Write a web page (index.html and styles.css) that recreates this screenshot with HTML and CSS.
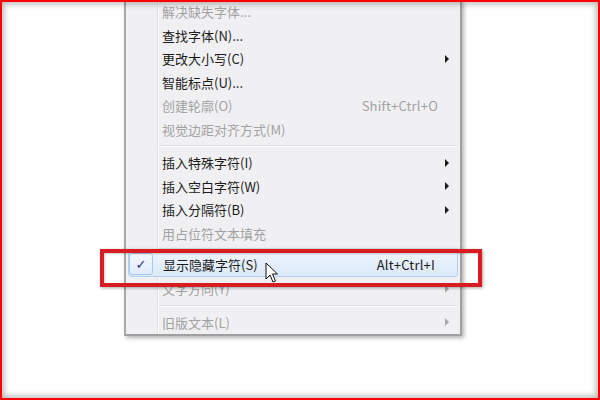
FILE: index.html
```html
<!DOCTYPE html>
<html lang="zh-CN">
<head>
<meta charset="utf-8">
<link rel="stylesheet" href="styles.css">
</head>
<body>
<div class="page">
  <div class="menu">
    <div class="row dis first"><span class="chk"></span><span class="lbl">解决缺失字体...</span><span class="sc"></span><span class="arr"></span></div>
    <div class="row"><span class="chk"></span><span class="lbl">查找字体(N)...</span><span class="sc"></span><span class="arr"></span></div>
    <div class="row"><span class="chk"></span><span class="lbl">更改大小写(C)</span><span class="sc"></span><span class="arr"><i class="tri"></i></span></div>
    <div class="row"><span class="chk"></span><span class="lbl">智能标点(U)...</span><span class="sc"></span><span class="arr"></span></div>
    <div class="row dis"><span class="chk"></span><span class="lbl">创建轮廓(O)</span><span class="sc">Shift+Ctrl+O</span><span class="arr"></span></div>
    <div class="row dis"><span class="chk"></span><span class="lbl">视觉边距对齐方式(M)</span><span class="sc"></span><span class="arr"></span></div>
    <div class="sep"></div>
    <div class="row"><span class="chk"></span><span class="lbl">插入特殊字符(I)</span><span class="sc"></span><span class="arr"><i class="tri"></i></span></div>
    <div class="row"><span class="chk"></span><span class="lbl">插入空白字符(W)</span><span class="sc"></span><span class="arr"><i class="tri"></i></span></div>
    <div class="row"><span class="chk"></span><span class="lbl">插入分隔符(B)</span><span class="sc"></span><span class="arr"><i class="tri"></i></span></div>
    <div class="row dis"><span class="chk"></span><span class="lbl">用占位符文本填充</span><span class="sc"></span><span class="arr"></span></div>
    <div class="sep tight"></div>
    <div class="row hot"><span class="chk"><span class="mark">✓</span></span><span class="lbl">显示隐藏字符(S)</span><span class="sc">Alt+Ctrl+I</span><span class="arr"></span></div>
    <div class="row dis"><span class="chk"></span><span class="lbl">文字方向(Y)</span><span class="sc"></span><span class="arr"><i class="tri"></i></span></div>
    <div class="sep"></div>
    <div class="row dis"><span class="chk"></span><span class="lbl">旧版文本(L)</span><span class="sc"></span><span class="arr"><i class="tri"></i></span></div>
  </div>
  <div class="callout"></div>
  <svg class="cursor" width="14" height="22" viewBox="0 0 14 22"><path d="M1 1 L1 17 L5 13 L8 20 L10.5 19 L7.5 12 L12.5 12 Z" fill="#fff" stroke="#111" stroke-width="1" stroke-linejoin="round"/></svg>
</div>
</body>
</html>
```
FILE: styles.css
```css
html, body { margin: 0; padding: 0; }
body { width: 600px; height: 400px; overflow: hidden; background: #fff; }
.page {
  position: relative;
  width: 600px; height: 400px;
  box-sizing: border-box;
  background: #fff;
  font-family: "Noto Sans CJK SC", "Noto Sans", sans-serif;
  font-size: 13px;
}
.page::after {
  content: "";
  position: absolute; inset: 0;
  border: 2px solid #ff0000;
  box-shadow: inset 0 0 6px 2px rgba(0,0,0,0.28);
  pointer-events: none;
}
.menu {
  margin-left: 124px;
  width: 338px;
  box-sizing: border-box;
  border-left: 2px solid #a9a9a9;
  border-right: 2px solid #a0a0a0;
  border-bottom: 2px solid #a0a0a0;
  background:
    linear-gradient(to right, transparent 31px, #e2e2e4 31px, #e2e2e4 32px, #fbfbfb 32px, #fbfbfb 33px, transparent 33px),
    #f0f0f2;
  box-shadow: 2px 2px 4px rgba(0,0,0,0.3);
}
.row {
  display: flex;
  align-items: center;
  height: 23.5px;
  color: #1b1b1b;
  box-sizing: border-box;
}
.row.dis { color: #a2a2a2; }
.chk { width: 36px; flex: none; align-self: stretch; display: flex; align-items: center; justify-content: center; box-sizing: border-box; }
.lbl { flex: 1; white-space: nowrap; }
.sc { flex: none; white-space: nowrap; letter-spacing: 0.2px; }
.arr { width: 22px; flex: none; display: flex; align-items: center; padding-left: 7px; box-sizing: border-box; }
.tri {
  display: block; width: 0; height: 0;
  border-top: 4px solid transparent;
  border-bottom: 4px solid transparent;
  border-left: 4px solid #1a1a1a;
}
.row.dis .tri { border-left-color: #a8a8a8; }
.sep {
  height: 1px;
  margin: 4px 2px 4px 33px;
  background: #e0e0e2;
  border-bottom: 1px solid #fdfdfd;
}
.sep.tight { margin: 3px 2px 1px 33px; }
.row.hot {
  height: 26px;
  margin: 0 2px 0 2px;
  border: 1px solid #b2d2f2;
  border-radius: 3px;
  background: linear-gradient(#eef5fd, #dbe9f9);
}
.row.hot .chk {
  width: 24px;
  margin-right: 10px;
  border: 1px solid #a8c8ec;
  border-radius: 3px;
  background: linear-gradient(#f3f8fe, #e0ecfa);
  margin-top: 1px; margin-bottom: 1px;
}
.mark { color: #26338a; font-family: "DejaVu Sans", sans-serif; font-size: 13px; font-weight: bold; }
.row.hot .arr { width: 22px; }
.callout {
  position: absolute;
  left: 100px; top: 249px;
  width: 382px; height: 38px;
  box-sizing: border-box;
  border: 4px solid #d81c22;
  box-shadow: 1px 1px 3px rgba(0,0,0,0.35), inset 1px 1px 2px rgba(0,0,0,0.2);
}
.cursor { position: absolute; left: 265px; top: 262px; }
```
